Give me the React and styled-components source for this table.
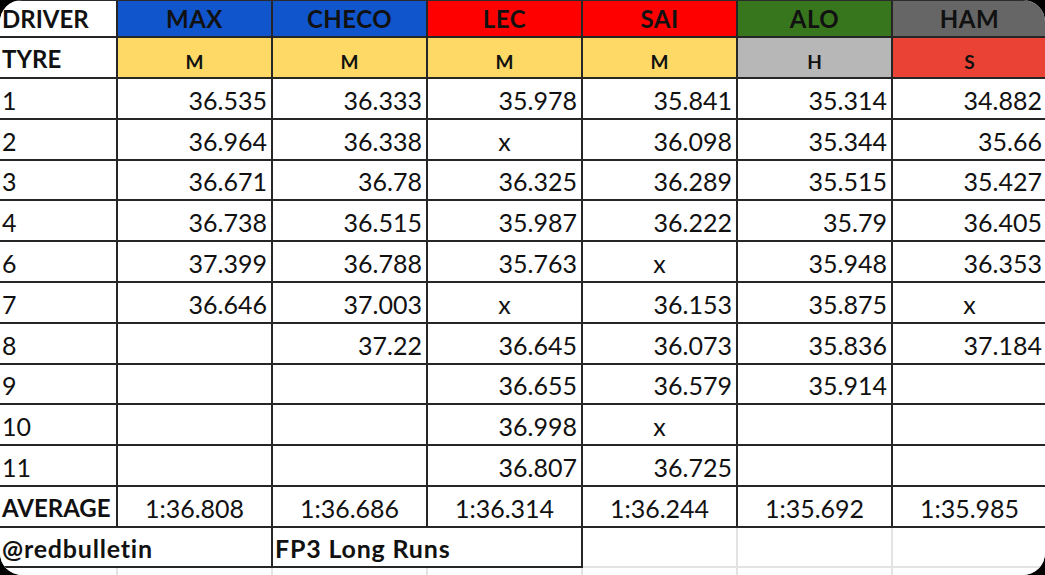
import React from "react";
import styled, { createGlobalStyle } from "styled-components";

const Global = createGlobalStyle`
  html, body { margin: 0; padding: 0; background: #000; }
  body { font-family: Lato, "Open Sans", sans-serif; }
`;

const Sheet = styled.div`
  width: 1045px;
  height: 575px;
  overflow: hidden;
  border-radius: 22px;
  background: #fff;
`;

const Grid = styled.div`
  display: grid;
  width: 1048px;
  grid-template-columns: 118px repeat(6, 155px);
  grid-template-rows: 37px 41px repeat(10, 40.8px) 41px 40px 20px;
  border-top: 1px solid #2b2b2b;
  color: #111;
`;

const lineColor = { dark: "#262626", light: "#e3e3e3", none: "transparent" };

const Cell = styled.div`
  box-sizing: border-box;
  display: flex;
  align-items: flex-end;
  justify-content: ${(p) =>
    p.$align === "right" ? "flex-end" : p.$align === "center" ? "center" : "flex-start"};
  grid-column: span ${(p) => p.$span || 1};
  padding: 0 ${(p) => (p.$align === "right" ? "4px" : "0")} ${(p) => p.$pb ?? 3}px
    ${(p) => (p.$align === "left" ? "2px" : "0")};
  background: ${(p) => p.$bg || "#fff"};
  border-right: 2px solid ${(p) => lineColor[p.$line || "dark"]};
  border-bottom: 2px solid ${(p) => lineColor[p.$line || "dark"]};
  font-size: ${(p) => p.$size || 25}px;
  font-weight: ${(p) => (p.$bold ? 700 : 400)};
  letter-spacing: ${(p) => p.$ls || 0}px;
  line-height: 1.2;
  white-space: nowrap;
`;

const drivers = [
  { name: "MAX", color: "#1155cc", tyre: "M", tyreBg: "#ffd966" },
  { name: "CHECO", color: "#1155cc", tyre: "M", tyreBg: "#ffd966" },
  { name: "LEC", color: "#ff0000", tyre: "M", tyreBg: "#ffd966" },
  { name: "SAI", color: "#ff0000", tyre: "M", tyreBg: "#ffd966" },
  { name: "ALO", color: "#38761d", tyre: "H", tyreBg: "#b7b7b7" },
  { name: "HAM", color: "#666666", tyre: "S", tyreBg: "#ea4335" },
];

const laps = [
  ["1", "36.535", "36.333", "35.978", "35.841", "35.314", "34.882"],
  ["2", "36.964", "36.338", "x", "36.098", "35.344", "35.66"],
  ["3", "36.671", "36.78", "36.325", "36.289", "35.515", "35.427"],
  ["4", "36.738", "36.515", "35.987", "36.222", "35.79", "36.405"],
  ["6", "37.399", "36.788", "35.763", "x", "35.948", "36.353"],
  ["7", "36.646", "37.003", "x", "36.153", "35.875", "x"],
  ["8", "", "37.22", "36.645", "36.073", "35.836", "37.184"],
  ["9", "", "", "36.655", "36.579", "35.914", ""],
  ["10", "", "", "36.998", "x", "", ""],
  ["11", "", "", "36.807", "36.725", "", ""],
];

const averages = ["1:36.808", "1:36.686", "1:36.314", "1:36.244", "1:35.692", "1:35.985"];

export default function App() {
  return (
    <>
      <Global />
      <Sheet>
        <Grid>
          <Cell $align="left" $bold $size={24} $pb={2}>DRIVER</Cell>
          {drivers.map((d) => (
            <Cell key={d.name} $align="center" $bold $size={24} $ls={0.5} $pb={2} $bg={d.color}>
              {d.name}
            </Cell>
          ))}

          <Cell $align="left" $bold $size={24} $pb={3}>TYRE</Cell>
          {drivers.map((d) => (
            <Cell key={d.name} $align="center" $bold $size={19} $pb={3} $bg={d.tyreBg}>
              {d.tyre}
            </Cell>
          ))}

          {laps.map((row) =>
            row.map((v, i) => (
              <Cell
                key={row[0] + "-" + i}
                $align={i === 0 ? "left" : v === "x" ? "center" : "right"}
              >
                {v}
              </Cell>
            ))
          )}

          <Cell $align="left" $bold $size={24}>AVERAGE</Cell>
          {averages.map((a, i) => (
            <Cell key={i} $align="center">{a}</Cell>
          ))}

          <Cell $align="left" $bold $size={25} $ls={0.8} $span={2}>@redbulletin</Cell>
          <Cell $align="left" $bold $size={25} $ls={0.8} $span={2}>FP3 Long Runs</Cell>
          <Cell $line="light" />
          <Cell $line="light" />
          <Cell $line="light" />

          {Array.from({ length: 7 }).map((_, i) => (
            <Cell key={"f" + i} $line="light" />
          ))}
        </Grid>
      </Sheet>
    </>
  );
}
